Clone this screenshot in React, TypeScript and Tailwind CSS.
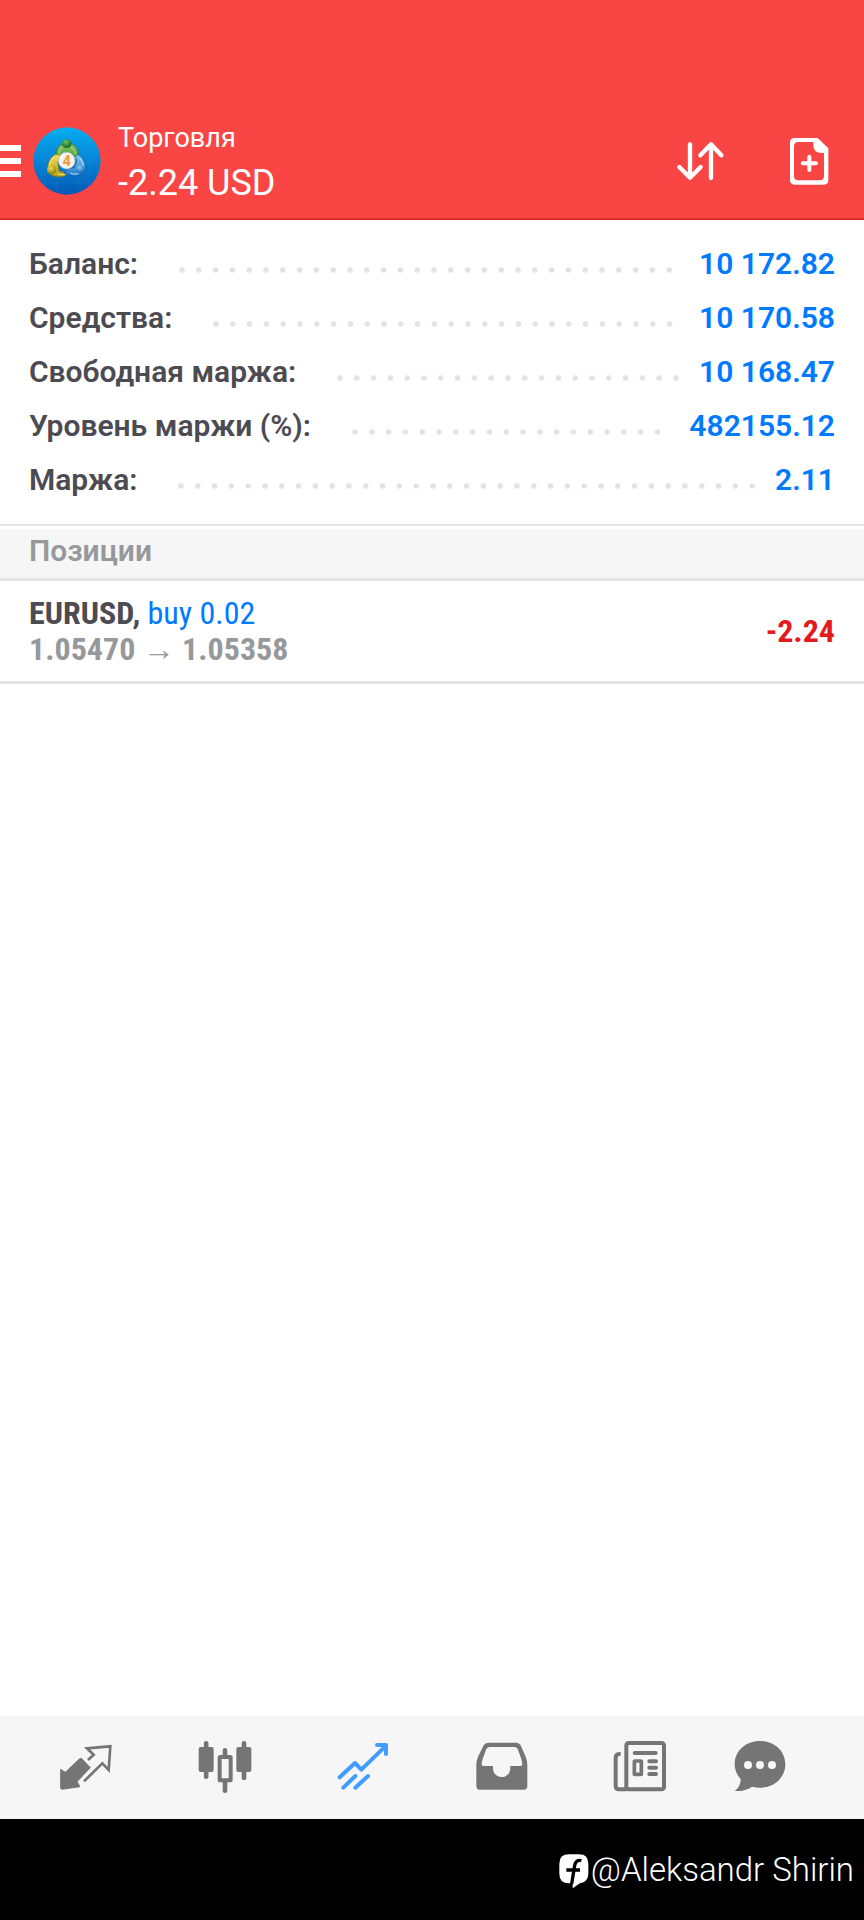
import type { ReactNode } from "react";

const account = [
  { label: "Баланс:", value: "10 172.82" },
  { label: "Средства:", value: "10 170.58" },
  { label: "Свободная маржа:", value: "10 168.47" },
  { label: "Уровень маржи (%):", value: "482155.12" },
  { label: "Маржа:", value: "2.11" },
];

function Leader() {
  return (
    <svg className="ml-[41px] mr-5 mt-3 h-2 min-w-0 flex-1" aria-hidden="true">
      <line x1="3" y1="4" x2="3000" y2="4" stroke="#e3e3e3" strokeWidth="5.500" strokeLinecap="round" strokeDasharray="0 16.8" />
    </svg>
  );
}

function Logo() {
  return (
    <svg viewBox="0 0 204 204" className="size-[68px] shrink-0" role="img" aria-label="MetaTrader 4">
      <defs>
        <linearGradient id="sky" x1="0" y1="0" x2="0" y2="1">
          <stop offset="0" stopColor="#05aef0" />
          <stop offset="0.5" stopColor="#0684d6" />
          <stop offset="1" stopColor="#0458b4" />
        </linearGradient>
        <linearGradient id="green" x1="0" y1="0" x2="0" y2="1">
          <stop offset="0" stopColor="#8ccb62" />
          <stop offset="1" stopColor="#2f8a35" />
        </linearGradient>
        <linearGradient id="yellow" x1="0" y1="0" x2="0" y2="1">
          <stop offset="0" stopColor="#f0e05a" />
          <stop offset="1" stopColor="#b39d12" />
        </linearGradient>
        <linearGradient id="blue" x1="0" y1="0" x2="0" y2="1">
          <stop offset="0" stopColor="#7cc8f4" />
          <stop offset="1" stopColor="#1f79c8" />
        </linearGradient>
        <radialGradient id="greenBall" cx="0.4" cy="0.3" r="0.7">
          <stop offset="0" stopColor="#6cc06a" />
          <stop offset="1" stopColor="#146b25" />
        </radialGradient>
        <radialGradient id="yellowBall" cx="0.4" cy="0.3" r="0.7">
          <stop offset="0" stopColor="#f0dc50" />
          <stop offset="1" stopColor="#94800c" />
        </radialGradient>
        <radialGradient id="blueBall" cx="0.4" cy="0.3" r="0.7">
          <stop offset="0" stopColor="#8ad0f8" />
          <stop offset="1" stopColor="#1668b4" />
        </radialGradient>
      </defs>
      <circle cx="102" cy="102" r="101" fill="url(#sky)" />
      <path d="M36 26v152M70 7v190M135 7v190M168 26v152M26 38h152M4 103h196M16 136h172M26 168h152" stroke="#3fb4ee" strokeOpacity="0.25" strokeWidth="1.5" />
      <path d="M68 92C66 60 84 48 102 48s37 12 35 44l-4 16-22-14-9-14-12 12-12 12z" fill="url(#green)" stroke="#1d6630" strokeWidth="2" />
      <path d="M78 90C76 68 88 56 102 56M112 60c12 6 18 18 16 36" fill="none" stroke="#b9e394" strokeWidth="3" />
      <path d="M68 82c-16 8-26 28-24 50 8 18 40 22 56 12l-6-8-16-4-4-26 12-20z" fill="url(#yellow)" stroke="#82740d" strokeWidth="2" />
      <path d="M64 90c-10 8-16 20-15 32M74 140c8 4 16 4 22 2" fill="none" stroke="#fff394" strokeWidth="3" />
      <path d="M138 84c14 10 22 28 19 46-8 18-42 24-64 8l10-12 20-4 8-20-4-18z" fill="url(#blue)" stroke="#145c9f" strokeWidth="2" />
      <path d="M140 94c8 8 12 18 10 28M112 138c8 4 16 4 24 2" fill="none" stroke="#c0e8ff" strokeWidth="3" />
      <ellipse cx="101" cy="50" rx="15" ry="13" fill="url(#greenBall)" />
      <ellipse cx="56" cy="128" rx="14" ry="13" fill="url(#yellowBall)" />
      <ellipse cx="142" cy="126" rx="13" ry="13" fill="url(#blueBall)" />
      <circle cx="101" cy="101" r="25" fill="#f4f2f1" stroke="#b9bcbc" strokeWidth="2" />
      <text x="101" y="116" textAnchor="middle" fontFamily="Roboto, sans-serif" fontWeight="700" fontSize="42" fill="#f59a2c">4</text>
    </svg>
  );
}

const gray = "#757575";

const tabs: { name: string; box: string; art: ReactNode }[] = [
  {
    name: "Котировки",
    box: "174 120 168 162",
    art: (
      <>
        <path d="M244 175 271 203 231 245 240 260 185 268 182 264 182 208 196 217 238 177Z" fill={gray} stroke={gray} strokeWidth="3" strokeLinejoin="round" />
        <path d="M264 180 281 164 261 145 331 139 326 210 307 190 252 244" fill="none" stroke={gray} strokeWidth="8" />
      </>
    ),
  },
  {
    name: "Графики",
    box: "588 120 168 162",
    art: (
      <>
        <path d="M615.500 130v100M729 130v104M672 151v20M672 243v29" stroke={gray} strokeWidth="14" strokeLinecap="round" />
        <rect x="593" y="141" width="45" height="75" rx="6" fill={gray} />
        <rect x="706" y="141" width="45" height="75" rx="6" fill={gray} />
        <rect x="656" y="171" width="33" height="70" rx="2" fill="none" stroke={gray} strokeWidth="12" />
      </>
    ),
  },
  {
    name: "Торговля",
    box: "134 120 168 162",
    art: (
      <g fill="none" stroke="#409cff" strokeWidth="12" strokeLinecap="round" strokeLinejoin="round">
        <path d="M148 232 194 189 213 209 284 140" />
        <path d="M260 135H287V162" />
        <path d="M159 263 195 228M195 263 233 228" />
      </g>
    ),
  },
  {
    name: "История",
    box: "551 120 168 162",
    art: (
      <path
        fillRule="evenodd"
        fill={gray}
        d="M594 128H678Q687 128 691 136L706 170Q711 182 711 194V258Q711 269 700 269H569Q558 269 558 258V194Q558 182 563 170L580 136Q584 128 594 128ZM598 141Q591 141 588 147L578 174Q574 186 574 193Q574 198 580 198H608V204C608 220 619 231 634 231S660 220 660 204V198H690Q696 198 696 193Q695 184 692 174L682 147Q679 141 673 141Z"
      />
    ),
  },
  {
    name: "Новости",
    box: "118 120 168 162",
    art: (
      <g fill="none" stroke={gray} strokeLinecap="round">
        <rect x="161" y="129" width="113" height="139" rx="7" strokeWidth="12" />
        <path d="M144 161Q129 161 129 173V258Q129 268 139 268H162" strokeWidth="12" strokeLinecap="butt" />
        <path d="M186 159H249M230 184H250M230 203.500H250M230 222H250" strokeWidth="12" />
        <rect x="185" y="183" width="21" height="40" rx="2" strokeWidth="11" />
      </g>
    ),
  },
  {
    name: "Чат",
    box: "477 120 168 162",
    art: (
      <>
        <path d="M561 123C604 123 637 153 637 193S604 263 561 263Q549 263 538 260Q514 275 485 273Q503 260 503 237Q485 218 485 193C485 153 518 123 561 123Z" fill={gray} />
        <circle cx="525" cy="195" r="12" fill="#f6f6f6" />
        <circle cx="561" cy="195" r="12" fill="#f6f6f6" />
        <circle cx="597" cy="195" r="12" fill="#f6f6f6" />
      </>
    ),
  },
];

export default function App() {
  return (
    <div className="flex min-h-screen flex-col bg-white font-['Roboto',sans-serif]">
      <header className="flex items-center border-b-2 border-[#dc2a26] bg-[#fa4545] pb-3 pt-[116px] text-white">
        <button aria-label="Меню" className="flex w-[21px] flex-col gap-[7px]">
          <span className="h-[6px] w-full bg-white" />
          <span className="h-[6px] w-full bg-white" />
          <span className="h-[6px] w-full bg-white" />
        </button>
        <div className="ml-3 flex flex-1 items-center gap-[17px]">
          <Logo />
          <div>
            <h1 className="text-[27px] leading-[44px]">Торговля</h1>
            <p className="text-[36px] leading-[46px]">-2.24 USD</p>
          </div>
        </div>
        <button aria-label="Сортировка" className="mr-16">
          <svg viewBox="108 90 147 126" className="h-[42px] w-[49px]" fill="none" stroke="currentColor" strokeWidth="13" strokeLinecap="round" strokeLinejoin="round">
            <path d="M150 103V202M118 171 150 203 182 171M213 204V104M181 136 213 103 244 136" />
          </svg>
        </button>
        <button aria-label="Новый ордер" className="mr-[35px]">
          <svg viewBox="447 81 120 147" className="h-[49px] w-[40px]" fill="currentColor">
            <path fillRule="evenodd" d="M464 84H533L565 115V210Q565 224 551 224H464Q450 224 450 210V98Q450 84 464 84ZM475 96Q462 96 462 109V198Q462 211 475 211H539Q552 211 552 198V129H542Q520 127 520 106V96Z" />
            <path d="M508 140V180M488 160H528" stroke="currentColor" strokeWidth="12" strokeLinecap="round" />
          </svg>
        </button>
      </header>

      <main className="flex-1">
        <dl className="border-b-2 border-[#e3e3e3] px-[29px] py-[17px]">
          {account.map((row) => (
            <div key={row.label} className="flex items-center text-[30px] font-semibold leading-[54px]">
              <dt className="text-[#4c4b52]">{row.label}</dt>
              <Leader />
              <dd className="text-[#007aff]">{row.value}</dd>
            </div>
          ))}
        </dl>
        <h2 className="mt-[3px] border-b-[3px] border-[#e3e3e3] bg-[#f6f6f6] px-[29px] pb-1.5 text-[30px] font-semibold leading-[43px] text-[#97989c]">
          Позиции
        </h2>
        <section className="flex items-center justify-between border-b-[3px] border-[#e3e3e3] px-[29px] py-3.5 font-['Roboto_Condensed','Liberation_Sans_Narrow',sans-serif] text-[32px] leading-[36px]">
          <div>
            <p className="text-[#007aff]">
              <b className="font-bold text-[#4c4b52]">EURUSD,</b> buy 0.02
            </p>
            <p className="font-bold text-[#97989c]">1.05470 → 1.05358</p>
          </div>
          <p className="font-bold text-[#e31b1d]">-2.24</p>
        </section>
      </main>

      <nav className="grid grid-cols-[repeat(5,139fr)_101fr] bg-[#f6f6f6] pb-0.5 pl-[17px] pr-[54px]">
        {tabs.map((tab) => (
          <button key={tab.name} aria-label={tab.name} className="flex h-[101px] items-center justify-center">
            <svg viewBox={tab.box} className="h-[54px] w-[56px]">
              {tab.art}
            </svg>
          </button>
        ))}
      </nav>

      <footer className="flex h-[101px] items-center justify-end bg-black pr-2.5 text-white">
        <svg viewBox="74 74 90 105" className="mt-1 h-[35px] w-[30px]" aria-hidden="true">
          <path d="M104 75H134Q162 75 162 103V133Q162 158 137 162L115 177V162H104Q75 162 75 133V103Q75 75 104 75Z" fill="#fff" />
          <path d="M141 94Q125 90 121 108L112 164M96 122H137" fill="none" stroke="#000" strokeWidth="10" />
        </svg>
        <p className="ml-0.5 text-[33px] font-light leading-[40px]">@Aleksandr Shirin</p>
      </footer>
    </div>
  );
}
